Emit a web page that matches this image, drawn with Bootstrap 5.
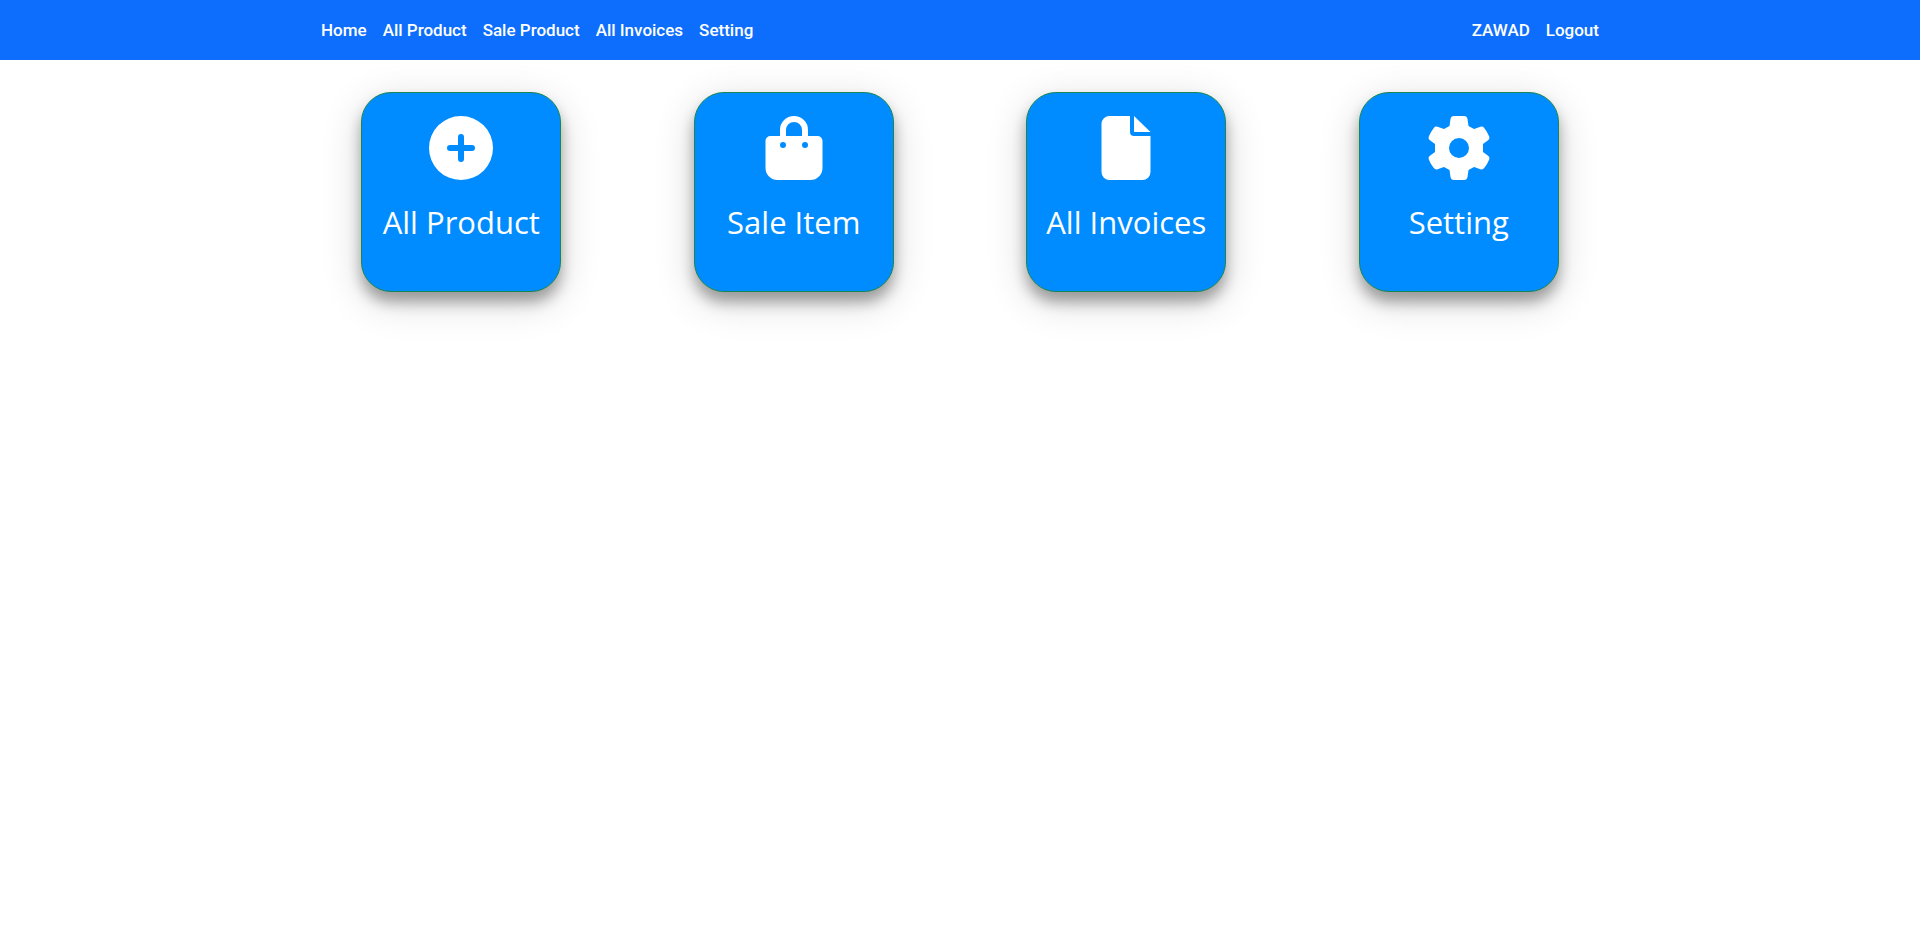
<!DOCTYPE html>
<html lang="en">
<head>
<meta charset="utf-8">
<meta name="viewport" content="width=device-width, initial-scale=1">
<title>Dashboard</title>
<link href="https://cdn.jsdelivr.net/npm/bootstrap@5.3.0/dist/css/bootstrap.min.css" rel="stylesheet">
<style>
  body { font-family: "Open Sans", "Noto Sans", sans-serif; }
  .top-nav { min-height: 60px; font-family: Roboto, "Liberation Sans", sans-serif; font-size: 17px; font-weight: 500; }
  .top-nav .navbar-nav { padding: 0 1px; }
  .top-nav .nav-link { color: #fff; padding: 9px 9px 8px; }
  .tile-area { padding: 32px 0 64px; }
  .tile-row { --bs-gutter-x: 10px; }
  .tile {
    width: 200px; height: 200px; padding-top: 23px;
    background: #008cff; color: #fff;
    border: 1px solid #198754; border-radius: 30px;
    box-shadow: 0 10px 14px rgba(0, 0, 0, .32), 0 10px 40px rgba(0, 0, 0, .16);
  }
  .tile:hover { color: #fff; }
  .tile svg { width: 64px; height: 64px; fill: currentColor; }
  .tile-label { font-size: 31px; line-height: 40px; margin-top: 22px; white-space: nowrap; }
</style>
</head>
<body>
<nav class="navbar navbar-expand bg-primary py-0 top-nav" aria-label="Main">
  <div class="container">
    <ul class="navbar-nav">
      <li class="nav-item"><a class="nav-link" href="#">Home</a></li>
      <li class="nav-item"><a class="nav-link" href="#">All Product</a></li>
      <li class="nav-item"><a class="nav-link" href="#">Sale Product</a></li>
      <li class="nav-item"><a class="nav-link" href="#">All Invoices</a></li>
      <li class="nav-item"><a class="nav-link" href="#">Setting</a></li>
    </ul>
    <ul class="navbar-nav ms-auto">
      <li class="nav-item"><a class="nav-link" href="#">ZAWAD</a></li>
      <li class="nav-item"><a class="nav-link" href="#">Logout</a></li>
    </ul>
  </div>
</nav>
<main class="container tile-area">
  <div class="row row-cols-1 row-cols-sm-2 row-cols-lg-4 tile-row gy-4">
    <div class="col d-flex justify-content-center">
      <a class="tile d-flex flex-column align-items-center text-decoration-none" href="#">
        <svg viewBox="0 0 64 64" aria-hidden="true"><path fill-rule="evenodd" d="M32 0a32 32 0 1 0 0 64a32 32 0 0 0 0-64ZM32 18a3 3 0 0 1 3 3v8h8a3 3 0 0 1 0 6h-8v8a3 3 0 0 1-6 0v-8h-8a3 3 0 0 1 0-6h8v-8a3 3 0 0 1 3-3Z"/></svg>
        <span class="tile-label">All Product</span>
      </a>
    </div>
    <div class="col d-flex justify-content-center">
      <a class="tile d-flex flex-column align-items-center text-decoration-none" href="#">
        <svg viewBox="0 0 64 64" aria-hidden="true"><path fill-rule="evenodd" d="M18 20v-6a14 14 0 0 1 28 0v6h9.500a5 5 0 0 1 5 5v27a12 12 0 0 1-12 12h-33a12 12 0 0 1-12-12v-27a5 5 0 0 1 5-5ZM24 20h16v-6a8 8 0 0 0-16 0ZM21 26a3 3 0 1 0 0 6a3 3 0 0 0 0-6ZM43 26a3 3 0 1 0 0 6a3 3 0 0 0 0-6Z"/></svg>
        <span class="tile-label">Sale Item</span>
      </a>
    </div>
    <div class="col d-flex justify-content-center">
      <a class="tile d-flex flex-column align-items-center text-decoration-none" href="#">
        <svg viewBox="0 0 64 64" aria-hidden="true"><path d="M15.500 0H36v16a4 4 0 0 0 4 4h16.500v36a8 8 0 0 1-8 8h-33a8 8 0 0 1-8-8V8a8 8 0 0 1 8-8ZM40 0l16.500 16H40Z"/></svg>
        <span class="tile-label">All Invoices</span>
      </a>
    </div>
    <div class="col d-flex justify-content-center">
      <a class="tile d-flex flex-column align-items-center text-decoration-none" href="#">
        <svg viewBox="0 0 64 64" aria-hidden="true"><path fill-rule="evenodd" d="M27 0h10q3 0 3.500 3l1 7l5.500 3l6.500-2.300q2.200-.7 3.700 1.200q3.200 4 5 8.600q.8 2.200-.8 3.500L56 28v8l5.400 4q1.600 1.300.8 3.500q-1.800 4.600-5 8.600q-1.500 1.900-3.700 1.200L47 51l-5.500 3l-1 7q-.5 3-3.500 3H27q-3 0-3.500-3l-1-7L17 51l-6.500 2.300q-2.200.7-3.700-1.200q-3.200-4-5-8.600q-.8-2.200.8-3.500L8 36v-8l-5.400-4q-1.600-1.300-.8-3.500q1.800-4.600 5-8.600q1.500-1.900 3.700-1.200L17 13l5.500-3l1-7q.5-3 3.500-3ZM32 22a10 10 0 1 0 0 20a10 10 0 0 0 0-20Z"/></svg>
        <span class="tile-label">Setting</span>
      </a>
    </div>
  </div>
</main>
<script src="https://cdn.jsdelivr.net/npm/bootstrap@5.3.0/dist/js/bootstrap.bundle.min.js"></script>
</body>
</html>
